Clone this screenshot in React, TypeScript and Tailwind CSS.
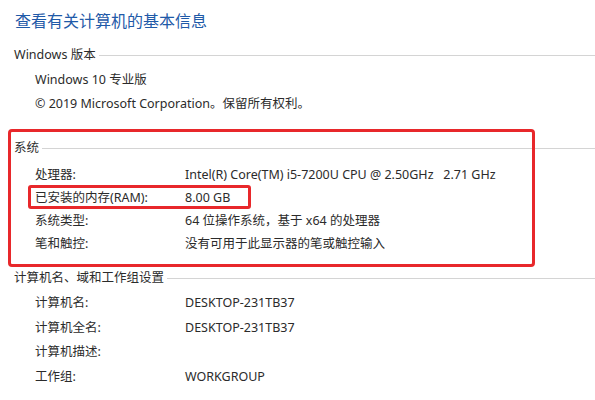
import React from "react";

const FONT = '"Segoe UI", "Noto Sans", "Noto Sans CJK SC", sans-serif';

function SectionHeader({ title, className = "" }: { title: string; className?: string }) {
  return (
    <div className={`flex items-center pl-[14px] ${className}`}>
      <span className="whitespace-nowrap">{title}</span>
      <div className="ml-[3px] h-px flex-1 bg-[#d4d4d4]" />
    </div>
  );
}

function Row({ label, value, h }: { label: string; value?: string; h: string }) {
  return (
    <div className={`flex items-center ${h}`}>
      <div className="w-[185px] pl-[35px] whitespace-nowrap">{label}</div>
      <div className="whitespace-pre">{value ?? ""}</div>
    </div>
  );
}

export default function App() {
  return (
    <div
      className="relative h-[400px] w-[595px] overflow-hidden bg-white text-[12.5px] leading-none text-[#2b2b2b]"
      style={{ fontFamily: FONT }}
    >
      <div className="flex h-[42px] items-center pl-[15px] text-[16px] text-[#1f5aa8]">
        查看有关计算机的基本信息
      </div>

      <SectionHeader title="Windows 版本" className="h-[26px]" />
      <div className="flex h-[24px] items-center pl-[35px]">Windows 10 专业版</div>
      <div className="flex h-[24px] items-center pl-[35px]">© 2019 Microsoft Corporation。保留所有权利。</div>

      <SectionHeader title="系统" className="mt-[19px] h-[26px]" />
      <div className="mt-[3px]">
        <Row h="h-[23px]" label="处理器:" value="Intel(R) Core(TM) i5-7200U CPU @ 2.50GHz   2.71 GHz" />
        <Row h="h-[23px]" label="已安装的内存(RAM):" value="8.00 GB" />
        <Row h="h-[23px]" label="系统类型:" value="64 位操作系统，基于 x64 的处理器" />
        <Row h="h-[23px]" label="笔和触控:" value="没有可用于此显示器的笔或触控输入" />
      </div>

      <SectionHeader title="计算机名、域和工作组设置" className="mt-[10px] h-[24px]" />
      <div className="mt-[1px]">
        <Row h="h-[24.5px]" label="计算机名:" value="DESKTOP-231TB37" />
        <Row h="h-[24.5px]" label="计算机全名:" value="DESKTOP-231TB37" />
        <Row h="h-[24.5px]" label="计算机描述:" />
        <Row h="h-[24.5px]" label="工作组:" value="WORKGROUP" />
      </div>

      {/* annotation overlays */}
      <div className="pointer-events-none absolute left-[8px] top-[129px] h-[138px] w-[527px] rounded-[4px] border-[3px] border-[#e8282b]" />
      <div className="pointer-events-none absolute left-[28px] top-[185px] h-[24px] w-[223px] rounded-[3px] border-[3px] border-[#e8282b]" />
    </div>
  );
}
